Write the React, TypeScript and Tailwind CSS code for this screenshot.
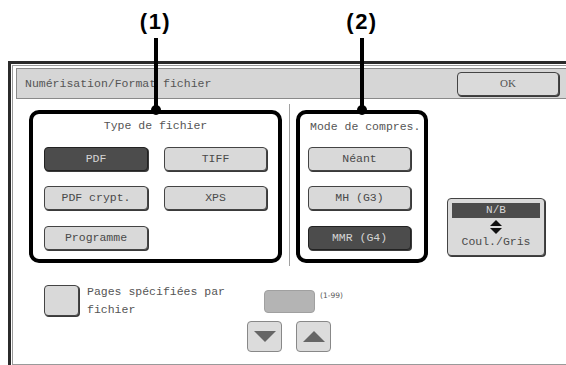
import React from 'react';

function Btn({ label, dark = false, className = '' }: { label: string; dark?: boolean; className?: string }) {
  return (
    <div
      className={
        'h-[24px] rounded-[4px] border flex items-center justify-center text-[11.5px] shadow-[1px_1px_0_#3a3a3a] ' +
        (dark ? 'bg-[#4c4c4c] border-[#222] text-[#d4d4d4] ' : 'bg-[#d9d9d9] border-[#444] text-[#4a4a4a] ') +
        className
      }
    >
      {label}
    </div>
  );
}

function Marker({ label }: { label: string }) {
  return (
    <>
      <div className="absolute left-1/2 -translate-x-1/2 -top-[103px] font-['Liberation_Sans',sans-serif] font-bold text-[22px] leading-none text-black tracking-[1.5px] whitespace-nowrap">
        {label}
      </div>
      <div className="absolute left-1/2 -translate-x-1/2 -top-[76px] w-[4px] h-[76px] bg-black" />
      <div className="absolute left-1/2 -translate-x-1/2 -top-[9px] w-[10px] h-[10px] rounded-full bg-black" />
    </>
  );
}

function Tri({ up }: { up?: boolean }) {
  return (
    <svg width="22" height="11" viewBox="0 0 22 11">
      {up ? <polygon points="0,11 22,11 11,0" fill="#666" /> : <polygon points="0,0 22,0 11,11" fill="#666" />}
    </svg>
  );
}

export default function App() {
  return (
    <div className="w-[566px] h-[365px] bg-white overflow-hidden relative font-['Liberation_Mono',monospace] text-[#4a4a4a]">
      <div className="h-[61px]" />
      <div className="ml-[8px] h-[304px] border-l-[3px] border-t-[3px] border-[#2b2b2b] pl-px pt-px">
        <div className="h-full border-l border-t border-b border-[#9a9a9a] pl-[3px] pt-[2px]">
          {/* title bar */}
          <div className="h-[31px] flex items-center bg-[#d6d6d6] border border-r-0 border-[#8a8a8a] pl-[8px]">
            <span className="text-[11.5px] text-[#555]">Numérisation/Format fichier</span>
            <div className="ml-auto mr-[7px] w-[102px] h-[24px] rounded-[4px] border border-[#444] bg-[#dadada] shadow-[1px_1px_0_#3a3a3a] flex items-center justify-center text-[11px] text-[#555] font-['Liberation_Serif',serif]">
              OK
            </div>
          </div>

          {/* sections */}
          <div className="flex items-start mt-[11px]">
            <div className="relative ml-[13px] w-[253px] h-[153px] border-4 border-black rounded-[10px]">
              <Marker label="(1)" />
              <div className="text-center text-[11.5px] leading-[14px] mt-[5px] text-[#555]">Type de fichier</div>
              <div className="grid grid-cols-[104px_103px] gap-x-[16px] gap-y-[15px] ml-[11px] mt-[14px]">
                <Btn label="PDF" dark />
                <Btn label="TIFF" />
                <Btn label="PDF crypt." />
                <Btn label="XPS" />
                <Btn label="Programme" className="mt-px" />
              </div>
            </div>

            <div className="ml-[7px] -mt-[6px] w-px h-[162px] bg-[#a0a0a0]" />

            <div className="relative ml-[6px] w-[132px] h-[153px] border-4 border-black rounded-[10px]">
              <Marker label="(2)" />
              <div className="text-[11.5px] leading-[14px] mt-[6px] ml-[10px] whitespace-nowrap text-[#555]">Mode de compres.</div>
              <div className="flex flex-col gap-[15px] ml-[8px] mt-[13px] w-[103px]">
                <Btn label="Néant" />
                <Btn label="MH (G3)" />
                <Btn label="MMR (G4)" dark className="mt-px" />
              </div>
            </div>

            <div className="ml-[19px] mt-[88px] w-[98px] h-[58px] rounded-[4px] border border-[#444] bg-[#dadada] shadow-[1px_1px_0_#3a3a3a] flex flex-col items-center px-[4px] pt-[4px]">
              <div className="w-full h-[15px] bg-[#4c4c4c] text-[#d8d8d8] text-[11px] leading-[15px] text-center">N/B</div>
              <svg width="12" height="14" viewBox="0 0 12 14" className="mt-[2px]">
                <polygon points="0,6 12,6 6,0" fill="#111" />
                <polygon points="0,8 12,8 6,14" fill="#111" />
              </svg>
              <div className="text-[11.5px] leading-[14px] text-[#4a4a4a] mt-[1px]">Coul./Gris</div>
            </div>
          </div>

          {/* bottom row */}
          <div className="flex items-start mt-[19px]">
            <div className="ml-[28px] w-[35px] h-[31px] rounded-[4px] border border-[#444] bg-[#d9d9d9] shadow-[1px_1px_0_#3a3a3a]" />
            <div className="ml-[8px] -mt-[2px] w-[160px] text-[11.5px] leading-[18px] text-[#555]">
              Pages spécifiées par
              <br />
              fichier
            </div>
            <div className="flex flex-col">
              <div className="flex items-start ml-[17px] mt-[5px]">
                <div className="w-[51px] h-[23px] rounded-[4px] bg-[#b4b4b4] border border-[#a0a0a0]" />
                <span className="ml-[5px] text-[7.5px] leading-none mt-[2px] font-['DejaVu_Sans',sans-serif] text-[#555]">(1-99)</span>
              </div>
              <div className="flex gap-[14px] mt-[8px]">
                <div className="w-[35px] h-[31px] rounded-[4px] border border-[#888] bg-[#dcdcdc] flex items-center justify-center">
                  <Tri />
                </div>
                <div className="w-[35px] h-[31px] rounded-[4px] border border-[#888] bg-[#dcdcdc] flex items-center justify-center">
                  <Tri up />
                </div>
              </div>
            </div>
          </div>
        </div>
      </div>
    </div>
  );
}
